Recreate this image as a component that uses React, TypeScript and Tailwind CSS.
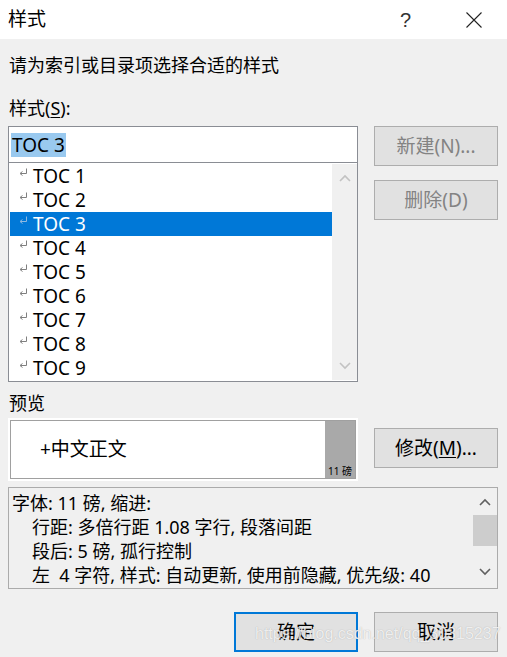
import React from "react";

const FONT = { fontFamily: '"Noto Sans", "Noto Sans CJK SC", sans-serif' };

function ReturnMark({ selected }: { selected?: boolean }) {
  const c = selected ? "#8fb9e0" : "#7f7f7f";
  return (
    <svg width="9" height="9" viewBox="0 0 9 9" className="shrink-0">
      <path d="M7.5 0.5 V5.5 H1.5" fill="none" stroke={c} strokeWidth="1" />
      <path d="M1 5.5 L3.5 3.5 M1 5.5 L3.5 7.5" fill="none" stroke={c} strokeWidth="1" />
    </svg>
  );
}

function Chevron({ up, color }: { up?: boolean; color: string }) {
  return (
    <svg width="12" height="8" viewBox="0 0 12 8">
      <polyline
        points={up ? "1,7 6,2 11,7" : "1,1 6,6 11,1"}
        fill="none"
        stroke={color}
        strokeWidth="1.6"
      />
    </svg>
  );
}

function Btn({
  children,
  disabled,
  primary,
}: {
  children: React.ReactNode;
  disabled?: boolean;
  primary?: boolean;
}) {
  return (
    <div
      className={
        "w-[124px] h-[40px] flex items-center justify-center bg-[#e1e1e1] text-[19px] " +
        (primary ? "border-2 border-[#0078d7] " : "border border-[#adadad] ") +
        (disabled ? "text-[#838383]" : "text-black")
      }
    >
      {children}
    </div>
  );
}

export default function App() {
  const items = [1, 2, 3, 4, 5, 6, 7, 8, 9];
  return (
    <div className="w-[507px] h-[657px] bg-[#f0f0f0] relative overflow-hidden text-black" style={FONT}>
      {/* Title bar */}
      <div className="h-[39px] bg-white flex items-center pl-[8px] pr-[25px]">
        <div className="text-[19px] leading-none">样式</div>
        <div className="flex-1" />
        <div className="text-[20px] leading-none text-[#333] mr-[55px]" style={{ fontFamily: '"Liberation Sans", sans-serif' }}>
          ?
        </div>
        <svg width="16" height="16" viewBox="0 0 16 16">
          <path d="M0.5 0.5 L15.5 15.5 M15.5 0.5 L0.5 15.5" stroke="#222" strokeWidth="1.1" />
        </svg>
      </div>

      {/* Body */}
      <div className="pl-[8px] pr-[9px]">
        <div className="mt-[13px] h-[26px] leading-[26px] text-[18px] pl-[1px]">请为索引或目录项选择合适的样式</div>
        <div className="mt-[17px] h-[26px] leading-[26px] text-[18px] pl-[1px]">
          样式(<span className="underline underline-offset-2">S</span>):
        </div>

        <div className="mt-[5px] flex">
          <div className="w-[350px]">
            <div className="h-[37px] bg-white border border-[#8a8d94] flex items-center pl-[2px]">
              <span className="bg-[#99c9ef] text-[19px] leading-[24px] px-[1px]">TOC 3</span>
            </div>
            <div className="h-[219px] bg-white border border-t-0 border-[#8a8d94] py-[1px] pl-[1px] flex">
              <div className="flex-1">
                {items.map((n) => {
                  const sel = n === 3;
                  return (
                    <div
                      key={n}
                      className={
                        "h-[24px] flex items-center pl-[9px] " +
                        (sel ? "bg-[#0078d7] text-white" : "text-black")
                      }
                    >
                      <div className="mt-[-7px]">
                        <ReturnMark selected={sel} />
                      </div>
                      <span className="text-[19px] leading-none ml-[5px]">TOC {n}</span>
                    </div>
                  );
                })}
              </div>
              <div className="w-[25px] bg-[#f0f0f0] flex flex-col items-center justify-between py-[10px]">
                <Chevron up color="#c2c2c2" />
                <Chevron color="#c2c2c2" />
              </div>
            </div>
          </div>
          <div className="ml-[16px] flex flex-col gap-[14px]">
            <Btn disabled>新建(N)...</Btn>
            <Btn disabled>删除(D)</Btn>
          </div>
        </div>

        <div className="mt-[8px] h-[26px] leading-[26px] text-[18px] pl-[1px]">预览</div>

        <div className="mt-[2px] flex">
          <div className="w-[350px] h-[63px] bg-white p-[2px]">
            <div className="h-full border border-[#a0a0a0] flex">
              <div className="flex-1 flex items-center pl-[29px] text-[19px]">+中文正文</div>
              <div className="w-[30px] bg-[#a9a9a9] flex items-end justify-center pb-[2px]">
                <span className="text-[10px] leading-none text-black">11 磅</span>
              </div>
            </div>
          </div>
          <div className="ml-[16px] mt-[10px]">
            <Btn>
              修改(<span className="underline underline-offset-2">M</span>)...
            </Btn>
          </div>
        </div>

        <div className="mt-[6px] w-[490px] h-[102px] border border-[#ababab] flex">
          <div className="flex-1 pl-[3px] pt-[3px] text-[18px] leading-[24px]">
            <div>字体: 11 磅, 缩进:</div>
            <div className="pl-[20px]">行距: 多倍行距 1.08 字行, 段落间距</div>
            <div className="pl-[20px]">段后: 5 磅, 孤行控制</div>
            <div className="pl-[20px] whitespace-nowrap">左&nbsp;&nbsp;4 字符, 样式: 自动更新, 使用前隐藏, 优先级: 40</div>
          </div>
          <div className="w-[25px] flex flex-col items-center pt-[10px]">
            <Chevron up color="#606060" />
            <div className="mt-[9px] w-[24px] h-[31px] bg-[#cdcdcd]" />
            <div className="mt-[22px]">
              <Chevron color="#606060" />
            </div>
          </div>
        </div>

        <div className="mt-[23px] flex justify-end gap-[16px]">
          <Btn primary>确定</Btn>
          <Btn>取消</Btn>
        </div>
      </div>

      {/* watermark */}
      <div
        className="absolute left-[255px] top-[626px] text-[16px] leading-none text-white/80 whitespace-nowrap"
        style={{ fontFamily: '"Liberation Sans", sans-serif', textShadow: "0 0 1px rgba(120,120,120,0.6)" }}
      >
        https://blog.csdn.net/qq_30315237
      </div>
    </div>
  );
}
